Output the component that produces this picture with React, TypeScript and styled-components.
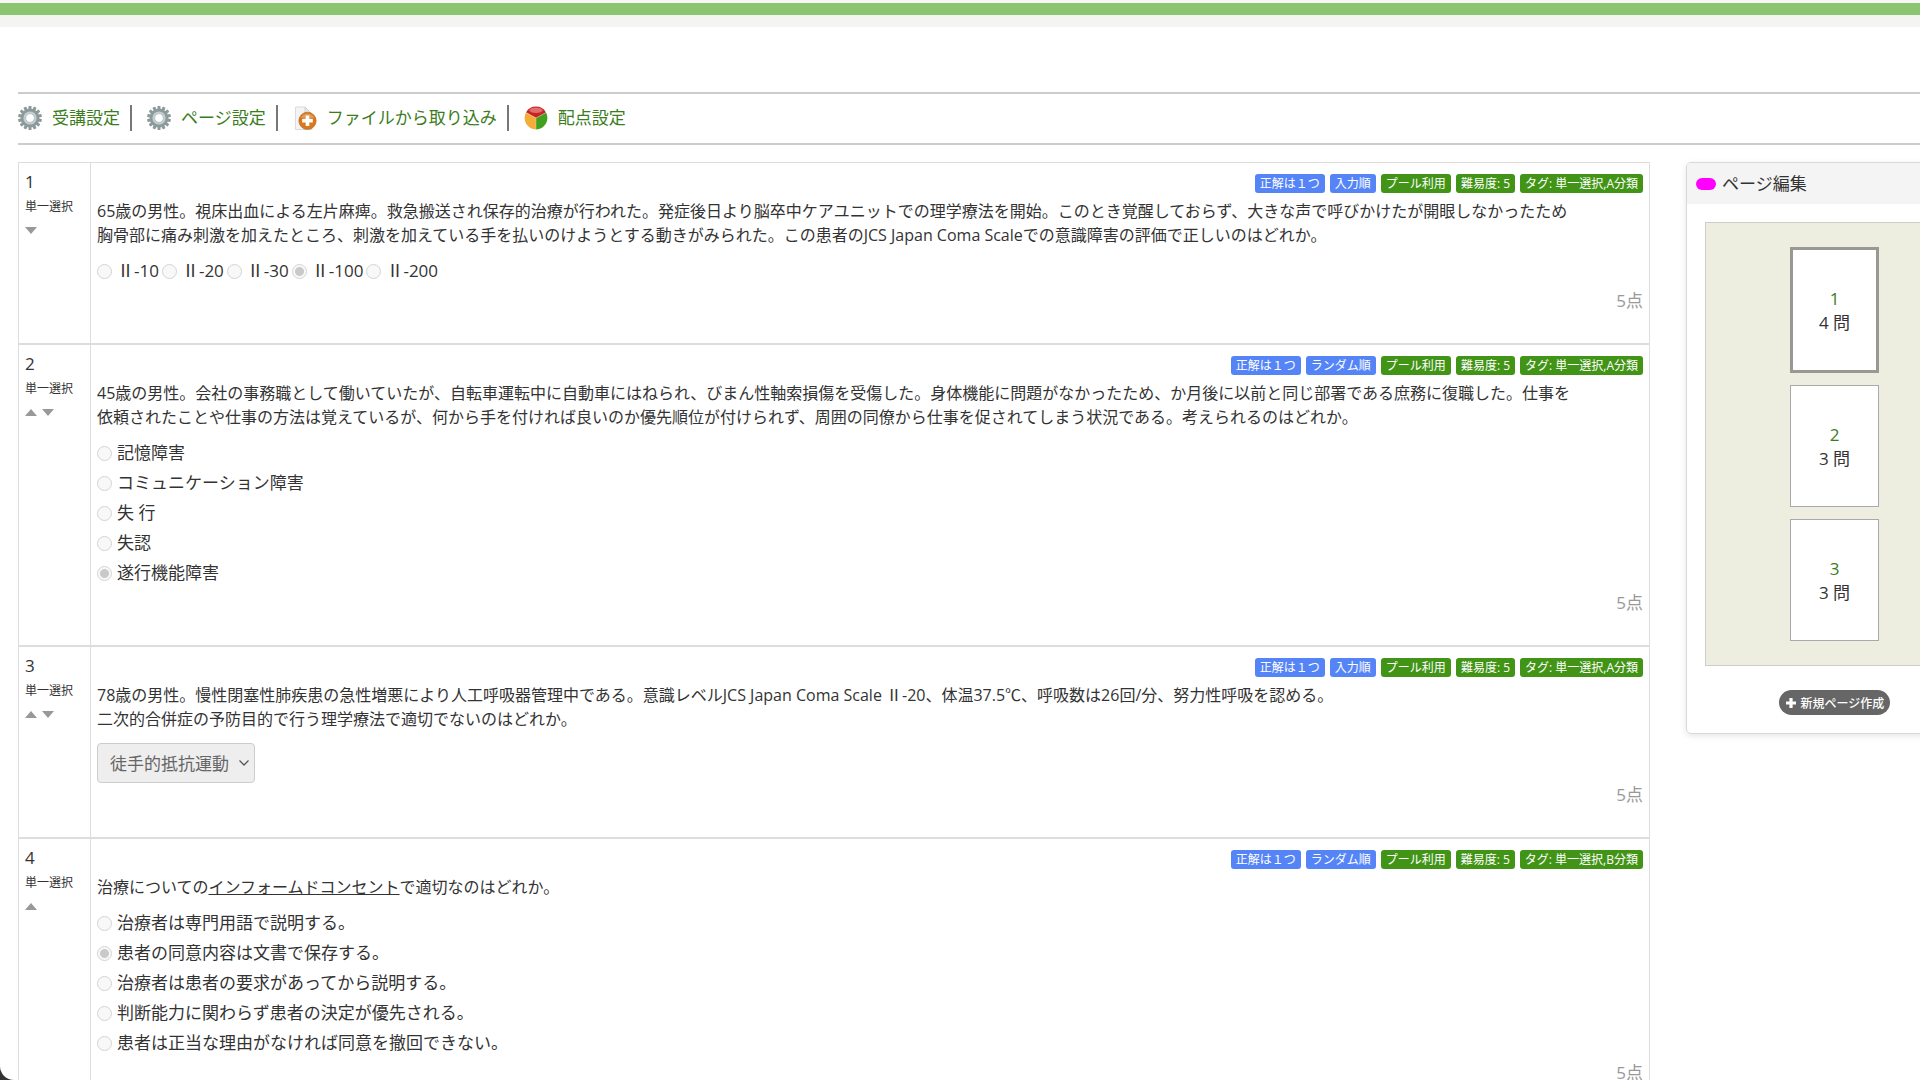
import React from "react";
import styled, { createGlobalStyle, css } from "styled-components";

const GlobalStyle = createGlobalStyle`
  * { box-sizing: border-box; }
  html, body { margin: 0; background: #333; }
  body, button, select {
    font-family: "Open Sans", "Noto Sans CJK JP", sans-serif;
    color: #333;
  }
`;

const Window = styled.div`
  height: 100vh;
  overflow: hidden;
  background: #fff;
  border-bottom-left-radius: 14px;
`;

const TopBar = styled.header`
  height: 27px;
  border-top: 3px solid #f7f7f7;
  border-bottom: 12px solid #f4f4f3;
  background: #8cc56f;
`;

const Canvas = styled.div`
  margin-right: -81px;
  padding: 65px 18px 0;
`;

const Toolbar = styled.nav`
  display: flex;
  align-items: center;
  height: 53px;
  padding-bottom: 2px;
  border-top: 2px solid #ccc;
  border-bottom: 2px solid #ccc;
`;

const ToolLink = styled.a`
  display: flex;
  align-items: center;
  gap: 10px;
  height: 26px;
  padding-right: 10px;
  font-size: 17px;
  line-height: 24px;
  color: #3b7d1c;
  text-decoration: none;

  & + & {
    padding-left: 15px;
    border-left: 2px solid #777;
  }
`;

const Columns = styled.div`
  display: grid;
  grid-template-columns: minmax(0, 1fr) 297px;
  align-items: start;
  gap: 36px;
  margin-top: 17px;
`;

const QuestionList = styled.ol`
  margin: 0;
  padding: 0;
  list-style: none;
  border: 1px solid #ddd;
`;

const QuestionRow = styled.li`
  display: grid;
  grid-template-columns: 72px minmax(0, 1fr);
  border-bottom: 2px solid #ddd;
`;

const Side = styled.div`
  display: flex;
  flex-direction: column;
  padding: 7px 6px;
  border-right: 1px solid #ddd;
`;

const Number = styled.span`
  font-size: 17px;
  line-height: 24px;
`;

const Kind = styled.span`
  font-size: 12px;
  line-height: 26px;
`;

const Arrows = styled.div`
  display: flex;
  gap: 5px;
  padding-top: 7px;
`;

const Arrow = styled.button<{ $down?: boolean }>`
  width: 12px;
  height: 7px;
  padding: 0;
  border: 0;
  background: #999;
  clip-path: ${(p) =>
    p.$down ? "polygon(0 0, 100% 0, 50% 100%)" : "polygon(50% 0, 100% 100%, 0 100%)"};
`;

const Body = styled.div`
  padding: 11px 6px 30px;
`;

const Tags = styled.div`
  display: flex;
  justify-content: flex-end;
  gap: 5px;
  margin-bottom: 6px;
`;

const Tag = styled.span<{ $blue?: boolean }>`
  padding: 0 5px;
  border-radius: 3px;
  background: ${(p) => (p.$blue ? "#5584f7" : "#429417")};
  color: #fff;
  font-size: 12px;
  line-height: 19px;
`;

const Prose = styled.p`
  margin: 0;
  font-size: 16px;
  line-height: 24px;
`;

const Options = styled.div<{ $inline?: boolean }>`
  display: flex;
  flex-direction: ${(p) => (p.$inline ? "row" : "column")};
  gap: ${(p) => (p.$inline ? "3px" : "6px")};
  padding: 12px 0 6px;
`;

const Option = styled.label`
  display: flex;
  align-items: center;
  gap: 5px;
  font-size: 17px;
  line-height: 24px;
`;

const Radio = styled.input`
  appearance: none;
  width: 15px;
  height: 15px;
  margin: 0;
  border: 1px solid #d4d4d4;
  border-radius: 50%;
  background: #f8f8f8;

  &:checked {
    background: radial-gradient(circle, #c9c9c9 4px, #f8f8f8 5px);
  }
`;

const SelectWrap = styled.div`
  display: grid;
  width: 158px;
  margin-top: 12px;
  align-items: center;

  & > * { grid-area: 1 / 1; }
  & > svg { justify-self: end; margin-right: 5px; }
`;

const Select = styled.select`
  appearance: none;
  height: 40px;
  padding: 0 12px;
  border: 1px solid #ccc;
  border-radius: 4px;
  background: #eee;
  color: #666;
  opacity: 1;
  font-size: 17px;
`;

const Points = styled.div`
  text-align: right;
  font-size: 17px;
  line-height: 24px;
  color: #999;
`;

const Panel = styled.aside`
  border: 1px solid #d8d8d8;
  border-radius: 5px;
  box-shadow: 0 2px 6px rgba(0, 0, 0, 0.1);
  overflow: hidden;
`;

const PanelTitle = styled.h2`
  display: flex;
  align-items: center;
  gap: 6px;
  margin: 0;
  padding: 0 9px;
  background: #f4f4f4;
  font-size: 17px;
  font-weight: 400;
  line-height: 41px;

  &::before {
    content: "";
    width: 20px;
    height: 12px;
    border-radius: 6px;
    background: #f0f;
  }
`;

const PanelBody = styled.div`
  display: flex;
  flex-direction: column;
  align-items: center;
  gap: 24px;
  padding: 18px;
`;

const PageBox = styled.div`
  display: flex;
  flex-direction: column;
  align-items: center;
  align-self: stretch;
  gap: 12px;
  padding: 24px;
  border: 1px solid #ccc;
  background: #edeee0;
`;

const PageCard = styled.div<{ $current?: boolean }>`
  display: flex;
  flex-direction: column;
  align-items: center;
  justify-content: center;
  width: 89px;
  height: 122px;
  padding-top: 2px;
  border: 1px solid #aaa;
  background: #fff;
  font-size: 17px;
  line-height: 24px;

  ${(p) =>
    p.$current &&
    css`
      height: 126px;
      border: 3px solid #999992;
    `}
`;

const PageLink = styled.a`
  color: #3b7d1c;
  text-decoration: none;
`;

const NewPage = styled.button`
  display: flex;
  align-items: center;
  gap: 4px;
  height: 25px;
  padding: 0 6px;
  border: 0;
  border-radius: 13px;
  background: #666;
  color: #fff;
  font-size: 12px;
  font-weight: 500;
`;

const Gear = () => (
  <svg width="24" height="24" viewBox="0 0 24 24" aria-hidden="true">
    <g fill="#8d9a9b">
      {Array.from({ length: 14 }, (_, i) => (
        <rect key={i} x="10.5" y="0" width="3" height="5" rx="0.6" transform={`rotate(${(i * 360) / 14} 12 12)`} />
      ))}
    </g>
    <circle cx="12" cy="12" r="7.4" fill="#c5cfd0" stroke="#8d9a9b" strokeWidth="4" />
    <circle cx="12" cy="12" r="6.6" fill="#c3ced1" />
    <circle cx="12" cy="12" r="4.4" fill="#fff" stroke="#b4c4c8" strokeWidth="1" />
  </svg>
);

const FileAdd = () => (
  <svg width="24" height="24" viewBox="0 0 24 24" aria-hidden="true">
    <path d="M2.500 1h9.500l7 7v15.500h-16.500z" fill="#f4f4f6" stroke="#dcdce0" />
    <path d="M12 1v7h7z" fill="#e8e8ea" stroke="#ccc" strokeWidth=".8" />
    <circle cx="14.500" cy="14.800" r="8.600" fill="#d9791f" stroke="#c0702a" strokeWidth=".8" />
    <path d="M8 11.500a7.500 7.500 0 0 1 13 0q-6.500 3-13 0z" fill="#fff" fillOpacity=".25" />
    <path d="M14.500 9.500v10.600M9.200 14.800h10.600" stroke="#fff" strokeWidth="3.600" />
  </svg>
);

const Pie = () => (
  <svg width="24" height="24" viewBox="0 0 24 24" aria-hidden="true">
    <path d="M12 12L2 6.500a11.400 11.400 0 0 1 20 0z" fill="#cc2222" />
    <path d="M12 12L2 6.500a11.400 11.400 0 0 0 10 16.900z" fill="#f3ad38" />
    <path d="M12 12L22 6.500a11.400 11.400 0 0 1-10 16.900z" fill="#43a01f" />
    <path d="M2 6.500l10 5.500 10-5.500M12 12v11.400" fill="none" stroke="#fff" strokeOpacity=".35" strokeWidth=".8" />
    <ellipse cx="12" cy="4.300" rx="6.500" ry="2.800" fill="#fff" fillOpacity=".35" />
  </svg>
);

const Chevron = () => (
  <svg width="12" height="8" viewBox="0 0 12 8" aria-hidden="true">
    <path d="M1.500 1.500L6 6l4.500-4.500" fill="none" stroke="#555" strokeWidth="1.300" />
  </svg>
);

const Plus = () => (
  <svg width="12" height="12" viewBox="0 0 12 12" aria-hidden="true">
    <path d="M6 1v10M1 6h10" stroke="#fff" strokeWidth="3.200" />
  </svg>
);

type Question = {
  order: string;
  group: string;
  text: React.ReactNode;
  options: string[];
  answer: number;
  view: "inline" | "list" | "select";
};

const questions: Question[] = [
  {
    order: "入力順",
    group: "A分類",
    text: (
      <>
        65歳の男性。視床出血による左片麻痺。救急搬送され保存的治療が行われた。発症後日より脳卒中ケアユニットでの理学療法を開始。このとき覚醒しておらず、大きな声で呼びかけたが開眼しなかったため
        <br />
        胸骨部に痛み刺激を加えたところ、刺激を加えている手を払いのけようとする動きがみられた。この患者のJCS Japan Coma Scaleでの意識障害の評価で正しいのはどれか。
      </>
    ),
    options: ["Ⅱ-10", "Ⅱ-20", "Ⅱ-30", "Ⅱ-100", "Ⅱ-200"],
    answer: 3,
    view: "inline",
  },
  {
    order: "ランダム順",
    group: "A分類",
    text: (
      <>
        45歳の男性。会社の事務職として働いていたが、自転車運転中に自動車にはねられ、びまん性軸索損傷を受傷した。身体機能に問題がなかったため、か月後に以前と同じ部署である庶務に復職した。仕事を
        <br />
        依頼されたことや仕事の方法は覚えているが、何から手を付ければ良いのか優先順位が付けられず、周囲の同僚から仕事を促されてしまう状況である。考えられるのはどれか。
      </>
    ),
    options: ["記憶障害", "コミュニケーション障害", "失 行", "失認", "遂行機能障害"],
    answer: 4,
    view: "list",
  },
  {
    order: "入力順",
    group: "A分類",
    text: (
      <>
        78歳の男性。慢性閉塞性肺疾患の急性増悪により人工呼吸器管理中である。意識レベルJCS Japan Coma Scale Ⅱ-20、体温37.5℃、呼吸数は26回/分、努力性呼吸を認める。
        <br />
        二次的合併症の予防目的で行う理学療法で適切でないのはどれか。
      </>
    ),
    options: ["徒手的抵抗運動"],
    answer: 0,
    view: "select",
  },
  {
    order: "ランダム順",
    group: "B分類",
    text: (
      <>
        治療についての<u>インフォームドコンセント</u>で適切なのはどれか。
      </>
    ),
    options: [
      "治療者は専門用語で説明する。",
      "患者の同意内容は文書で保存する。",
      "治療者は患者の要求があってから説明する。",
      "判断能力に関わらず患者の決定が優先される。",
      "患者は正当な理由がなければ同意を撤回できない。",
    ],
    answer: 1,
    view: "list",
  },
];

const pages = [4, 3, 3];

export default function App() {
  return (
    <>
      <GlobalStyle />
      <Window>
        <TopBar />
        <Canvas>
          <Toolbar>
            <ToolLink href="#course"><Gear />受講設定</ToolLink>
            <ToolLink href="#page"><Gear />ページ設定</ToolLink>
            <ToolLink href="#import"><FileAdd />ファイルから取り込み</ToolLink>
            <ToolLink href="#score"><Pie />配点設定</ToolLink>
          </Toolbar>
          <Columns>
            <QuestionList>
              {questions.map((q, i) => (
                <QuestionRow key={i}>
                  <Side>
                    <Number>{i + 1}</Number>
                    <Kind>単一選択</Kind>
                    <Arrows>
                      {i > 0 && <Arrow aria-label="上へ" />}
                      {i < questions.length - 1 && <Arrow $down aria-label="下へ" />}
                    </Arrows>
                  </Side>
                  <Body>
                    <Tags>
                      <Tag $blue>正解は１つ</Tag>
                      <Tag $blue>{q.order}</Tag>
                      <Tag>プール利用</Tag>
                      <Tag>難易度: 5</Tag>
                      <Tag>タグ: 単一選択,{q.group}</Tag>
                    </Tags>
                    <Prose>{q.text}</Prose>
                    {q.view === "select" ? (
                      <SelectWrap>
                        <Select disabled aria-label="解答" defaultValue={q.options[q.answer]}>
                          {q.options.map((o) => (
                            <option key={o}>{o}</option>
                          ))}
                        </Select>
                        <Chevron />
                      </SelectWrap>
                    ) : (
                      <Options $inline={q.view === "inline"}>
                        {q.options.map((o, n) => (
                          <Option key={o}>
                            <Radio type="radio" name={`q${i}`} disabled defaultChecked={n === q.answer} />
                            {o}
                          </Option>
                        ))}
                      </Options>
                    )}
                    <Points>5点</Points>
                  </Body>
                </QuestionRow>
              ))}
            </QuestionList>
            <Panel>
              <PanelTitle>ページ編集</PanelTitle>
              <PanelBody>
                <PageBox>
                  {pages.map((count, i) => (
                    <PageCard key={i} $current={i === 0}>
                      <PageLink href={`#page-${i + 1}`}>{i + 1}</PageLink>
                      <span>{count} 問</span>
                    </PageCard>
                  ))}
                </PageBox>
                <NewPage><Plus />新規ページ作成</NewPage>
              </PanelBody>
            </Panel>
          </Columns>
        </Canvas>
      </Window>
    </>
  );
}
